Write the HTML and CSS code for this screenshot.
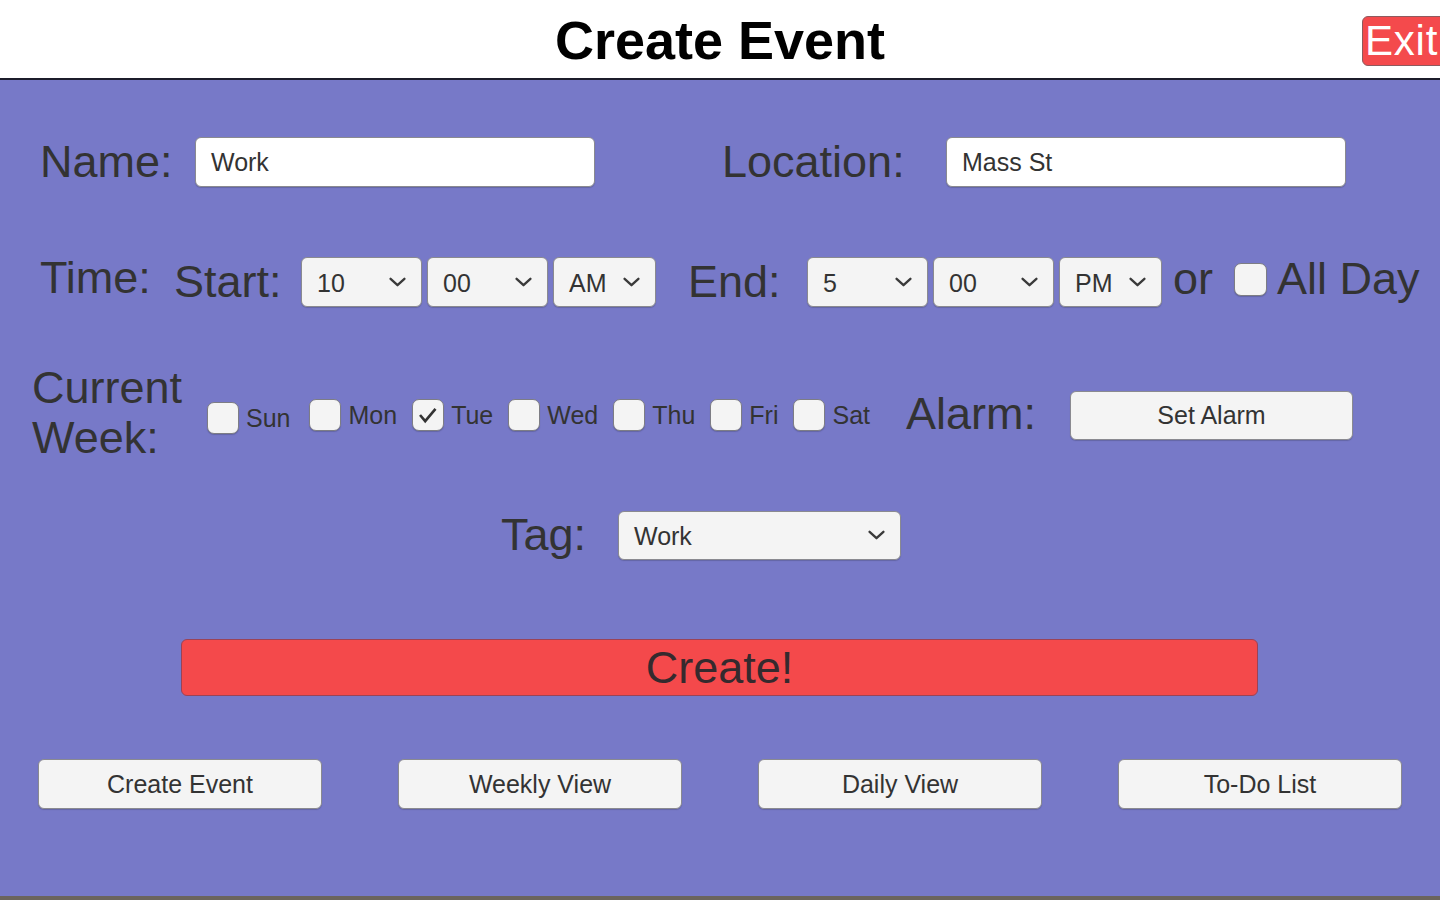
FILE: index.html
```html
<!DOCTYPE html>
<html>
<head>
<meta charset="utf-8">
<link rel="stylesheet" href="styles.css">
</head>
<body>
<div class="app">
  <header class="header">
    <h1 class="title">Create Event</h1>
    <button class="exit">Exit</button>
  </header>
  <main class="main">
    <div class="row row-name">
      <label class="lbl lbl-name">Name:</label>
      <div class="field field-name">Work</div>
      <label class="lbl lbl-loc">Location:</label>
      <div class="field field-loc">Mass St</div>
    </div>

    <div class="row row-time">
      <label class="lbl lbl-time">Time:</label>
      <label class="lbl lbl-start">Start:</label>
      <div class="sel sel-num"><span>10</span><svg class="chev" viewBox="0 0 16 9"><path d="M1.5 1.5 L8 7.5 L14.5 1.5"/></svg></div>
      <div class="sel sel-num"><span>00</span><svg class="chev" viewBox="0 0 16 9"><path d="M1.5 1.5 L8 7.5 L14.5 1.5"/></svg></div>
      <div class="sel sel-ap"><span>AM</span><svg class="chev" viewBox="0 0 16 9"><path d="M1.5 1.5 L8 7.5 L14.5 1.5"/></svg></div>
      <label class="lbl lbl-end">End:</label>
      <div class="sel sel-num"><span>5</span><svg class="chev" viewBox="0 0 16 9"><path d="M1.5 1.5 L8 7.5 L14.5 1.5"/></svg></div>
      <div class="sel sel-num"><span>00</span><svg class="chev" viewBox="0 0 16 9"><path d="M1.5 1.5 L8 7.5 L14.5 1.5"/></svg></div>
      <div class="sel sel-ap"><span>PM</span><svg class="chev" viewBox="0 0 16 9"><path d="M1.5 1.5 L8 7.5 L14.5 1.5"/></svg></div>
      <span class="lbl lbl-or">or</span>
      <span class="box box-allday"></span>
      <span class="lbl lbl-allday">All Day</span>
    </div>

    <div class="row row-week">
      <label class="lbl lbl-week">Current<br>Week:</label>
      <div class="days">
        <div class="day day-sun"><span class="box"></span><span class="dname">Sun</span></div>
        <div class="day"><span class="box"></span><span class="dname">Mon</span></div>
        <div class="day"><span class="box checked"><svg viewBox="0 0 32 32"><path d="M7.5 16 L13 22.5 L24 9.5"/></svg></span><span class="dname">Tue</span></div>
        <div class="day"><span class="box"></span><span class="dname">Wed</span></div>
        <div class="day"><span class="box"></span><span class="dname">Thu</span></div>
        <div class="day"><span class="box"></span><span class="dname">Fri</span></div>
        <div class="day"><span class="box"></span><span class="dname">Sat</span></div>
      </div>
      <label class="lbl lbl-alarm">Alarm:</label>
      <button class="btn btn-alarm">Set Alarm</button>
    </div>

    <div class="row row-tag">
      <label class="lbl lbl-tag">Tag:</label>
      <div class="sel sel-tag"><span>Work</span><svg class="chev" viewBox="0 0 16 9"><path d="M1.5 1.5 L8 7.5 L14.5 1.5"/></svg></div>
    </div>

    <div class="row row-create">
      <button class="create">Create!</button>
    </div>

    <nav class="row nav">
      <button class="btn nav-btn">Create Event</button>
      <button class="btn nav-btn">Weekly View</button>
      <button class="btn nav-btn">Daily View</button>
      <button class="btn nav-btn">To-Do List</button>
    </nav>
  </main>
  <div class="strip"></div>
</div>
</body>
</html>
```

FILE: styles.css
```css
* { box-sizing: border-box; }
html, body { margin: 0; padding: 0; }
body {
  width: 1440px;
  height: 900px;
  overflow: hidden;
  font-family: "Liberation Sans", Arial, sans-serif;
  color: #333333;
}
.app {
  display: flex;
  flex-direction: column;
  height: 900px;
}
.header {
  position: relative;
  height: 80px;
  background: #ffffff;
  border-bottom: 2px solid #1c1d2b;
  display: flex;
  justify-content: center;
  align-items: flex-start;
}
.title {
  margin: 0;
  margin-top: 9px;
  font-size: 54px;
  font-weight: bold;
  line-height: 62px;
  color: #000000;
}
.exit {
  position: absolute;
  left: 1362px;
  top: 16px;
  width: 90px;
  height: 50px;
  padding: 0 0 0 2px;
  text-align: left;
  background: #f44a4c;
  border: 1.5px solid #8e5a5e;
  border-radius: 6px;
  color: #ffffff;
  font-family: "Liberation Sans", Arial, sans-serif;
  font-size: 42px;
  letter-spacing: 0.8px;
  line-height: 46px;
}
.main {
  height: 816px;
  background: #7779c8;
  display: flex;
  flex-direction: column;
}
.strip {
  height: 4px;
  background: #6b645d;
}
.row {
  display: flex;
  align-items: center;
}
.lbl {
  font-size: 45px;
  line-height: 50px;
  color: #333333;
  white-space: nowrap;
}
.field, .sel, .btn {
  background: #f4f4f4;
  border: 1.5px solid #8a8a90;
  border-radius: 6px;
  box-shadow: 0 1px 1px rgba(40, 40, 60, 0.25);
  font-family: "Liberation Sans", Arial, sans-serif;
  font-size: 25px;
  color: #333333;
}
.field {
  background: #ffffff;
  height: 50px;
  width: 400px;
  padding: 0 15px;
  display: flex;
  align-items: center;
}

/* row 1 */
.row-name { margin-top: 57px; height: 50px; padding-left: 40px; }
.lbl-name { width: 155px; }
.lbl-loc { margin-left: 127px; width: 224px; }

/* row 2 */
.row-time { margin-top: 70px; height: 50px; padding-left: 40px; }
.lbl-time { width: 134px; margin-bottom: 8px; }
.lbl-start { width: 127px; }
.sel {
  height: 50px;
  display: flex;
  align-items: center;
  justify-content: space-between;
  padding: 0 15px 0 15px;
  margin-right: 5px;
}
.sel span { padding-top: 2px; }
.sel-num { width: 121px; }
.sel-ap { width: 103px; }
.chev {
  width: 17px;
  height: 10px;
  fill: none;
  stroke: #3a3a3a;
  stroke-width: 2.2;
  stroke-linecap: round;
  stroke-linejoin: round;
}
.lbl-end { margin-left: 27px; width: 119px; }
.lbl-or { margin-left: 6px; width: 61px; margin-bottom: 6px; }
.box {
  display: inline-flex;
  align-items: center;
  justify-content: center;
  width: 33px;
  height: 33px;
  background: #f4f4f4;
  border: 1.5px solid #7d7d84;
  border-radius: 7px;
  box-shadow: 0 1px 1px rgba(40, 40, 60, 0.25);
  flex: none;
}
.box-allday { margin-bottom: 6px; }
.lbl-allday { margin-left: 10px; margin-bottom: 6px; }
.box svg {
  width: 30px;
  height: 30px;
  fill: none;
  stroke: #333333;
  stroke-width: 2.8;
}

/* row 3 */
.row-week { margin-top: 83px; height: 50px; padding-left: 32px; }
.lbl-week { width: 175px; margin-bottom: 4px; }
.days {
  display: flex;
  align-items: center;
  width: 699px;
}
.day {
  display: flex;
  align-items: center;
  gap: 7px;
  margin-right: 15px;
}
.day .box { width: 32px; height: 32px; }
.day-sun { margin-top: 5px; margin-right: 19px; }
.dname { font-size: 25px; line-height: 30px; }
.lbl-alarm { width: 164px; margin-bottom: 2px; }
.btn {
  height: 49px;
  display: flex;
  align-items: center;
  justify-content: center;
  padding: 0;
  cursor: pointer;
}
.btn-alarm { width: 283px; }

/* row 4 */
.row-tag { margin-top: 70px; height: 50px; padding-left: 501px; }
.lbl-tag { width: 117px; }
.sel-tag { width: 283px; height: 49px; }

/* create */
.row-create { margin-top: 79px; padding-left: 181px; }
.create {
  width: 1077px;
  height: 57px;
  background: #f4494b;
  border: 1.5px solid #9a4357;
  border-radius: 6px;
  font-family: "Liberation Sans", Arial, sans-serif;
  font-size: 45px;
  line-height: 50px;
  color: #352a2e;
  padding: 0;
}

/* nav */
.nav {
  margin-top: 63px;
  padding-left: 38px;
  gap: 76px;
}
.nav-btn { width: 284px; height: 50px; }
```
